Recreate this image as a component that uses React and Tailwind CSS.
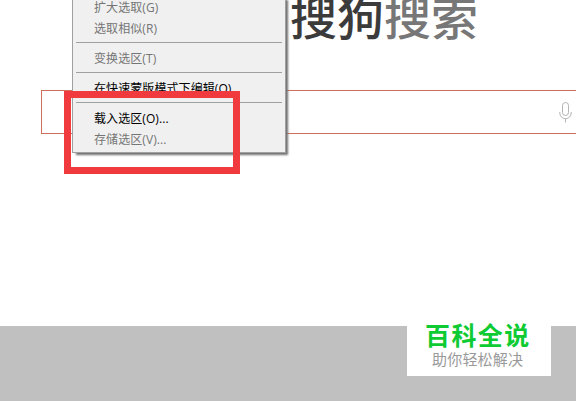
import React from 'react';

const menuGroups = [
  [
    { label: '扩大选取(G)', disabled: true },
    { label: '选取相似(R)', disabled: true },
  ],
  [{ label: '变换选区(T)', disabled: true }],
  [{ label: '在快速蒙版模式下编辑(Q)' }],
  [
    { label: '载入选区(O)...' },
    { label: '存储选区(V)...', disabled: true },
  ],
];

function ContextMenu() {
  return (
    <div className="absolute left-[72px] -top-[4px] w-[214px] h-[157px] bg-[#f0f0f0] border border-[#a0a0a0] shadow-[3px_3px_2px_-1px_#707070] font-['Open_Sans','Noto_Sans_CJK_SC',sans-serif] text-[12px] tracking-[0.08px]">
      {menuGroups.map((group, i) => (
        <div
          key={i}
          className={i > 0 ? 'mx-[3px] mt-[3px] pt-[5px] border-t border-[#a0a0a0]' : 'mx-[3px]'}
        >
          {group.map((item) => (
            <div
              key={item.label}
              className={`h-[21px] pl-[18px] leading-[21px] whitespace-nowrap ${item.disabled ? 'text-[#757575]' : 'text-black'}`}
            >
              {item.label}
            </div>
          ))}
        </div>
      ))}
    </div>
  );
}

function MicIcon() {
  return (
    <svg width="13" height="21" viewBox="0 0 13 21" fill="none" stroke="#b4b4b4" strokeWidth="1">
      <rect x="3.5" y="0.5" width="6" height="13" rx="3" />
      <path d="M0.8 10v1a5.7 5.7 0 0 0 11.4 0v-1M6.5 16.7v3.8" />
    </svg>
  );
}

export default function App() {
  return (
    <div className="relative w-[576px] h-[401px] overflow-hidden bg-white font-['Noto_Sans_CJK_SC',sans-serif] flex flex-col">
      <div className="h-[90px] pl-[290px]">
        <div className="-mt-[10px] text-[47px] leading-[50px] font-medium whitespace-nowrap text-[#3b3b3b]">
          搜狗<span className="text-[#777777]">搜索</span>
        </div>
      </div>

      <div className="ml-[41px] h-[44px] shrink-0 border border-r-0 border-[#d0705c] flex items-center justify-end pr-[4px]">
        <MicIcon />
      </div>

      <div className="mt-auto h-[75px] bg-[#c0c0c0]" />

      <ContextMenu />

      {/* Highlight frame */}
      <div className="absolute left-[64px] top-[91px] w-[176px] h-[83px] border-[7px] border-[#f03a3e]" />

      {/* Site badge */}
      <div className="absolute left-[407px] top-[316px] w-[144px] h-[60px] bg-white pt-[5px] whitespace-nowrap">
        <div className="pl-[18px] text-[25px] leading-[26px] tracking-[1.4px] font-bold text-[#0fcb33]">百科全说</div>
        <div className="pl-[25px] mt-[2px] text-[15px] leading-[20px] tracking-[0.2px] text-[#999999]">助你轻松解决</div>
      </div>
    </div>
  );
}
